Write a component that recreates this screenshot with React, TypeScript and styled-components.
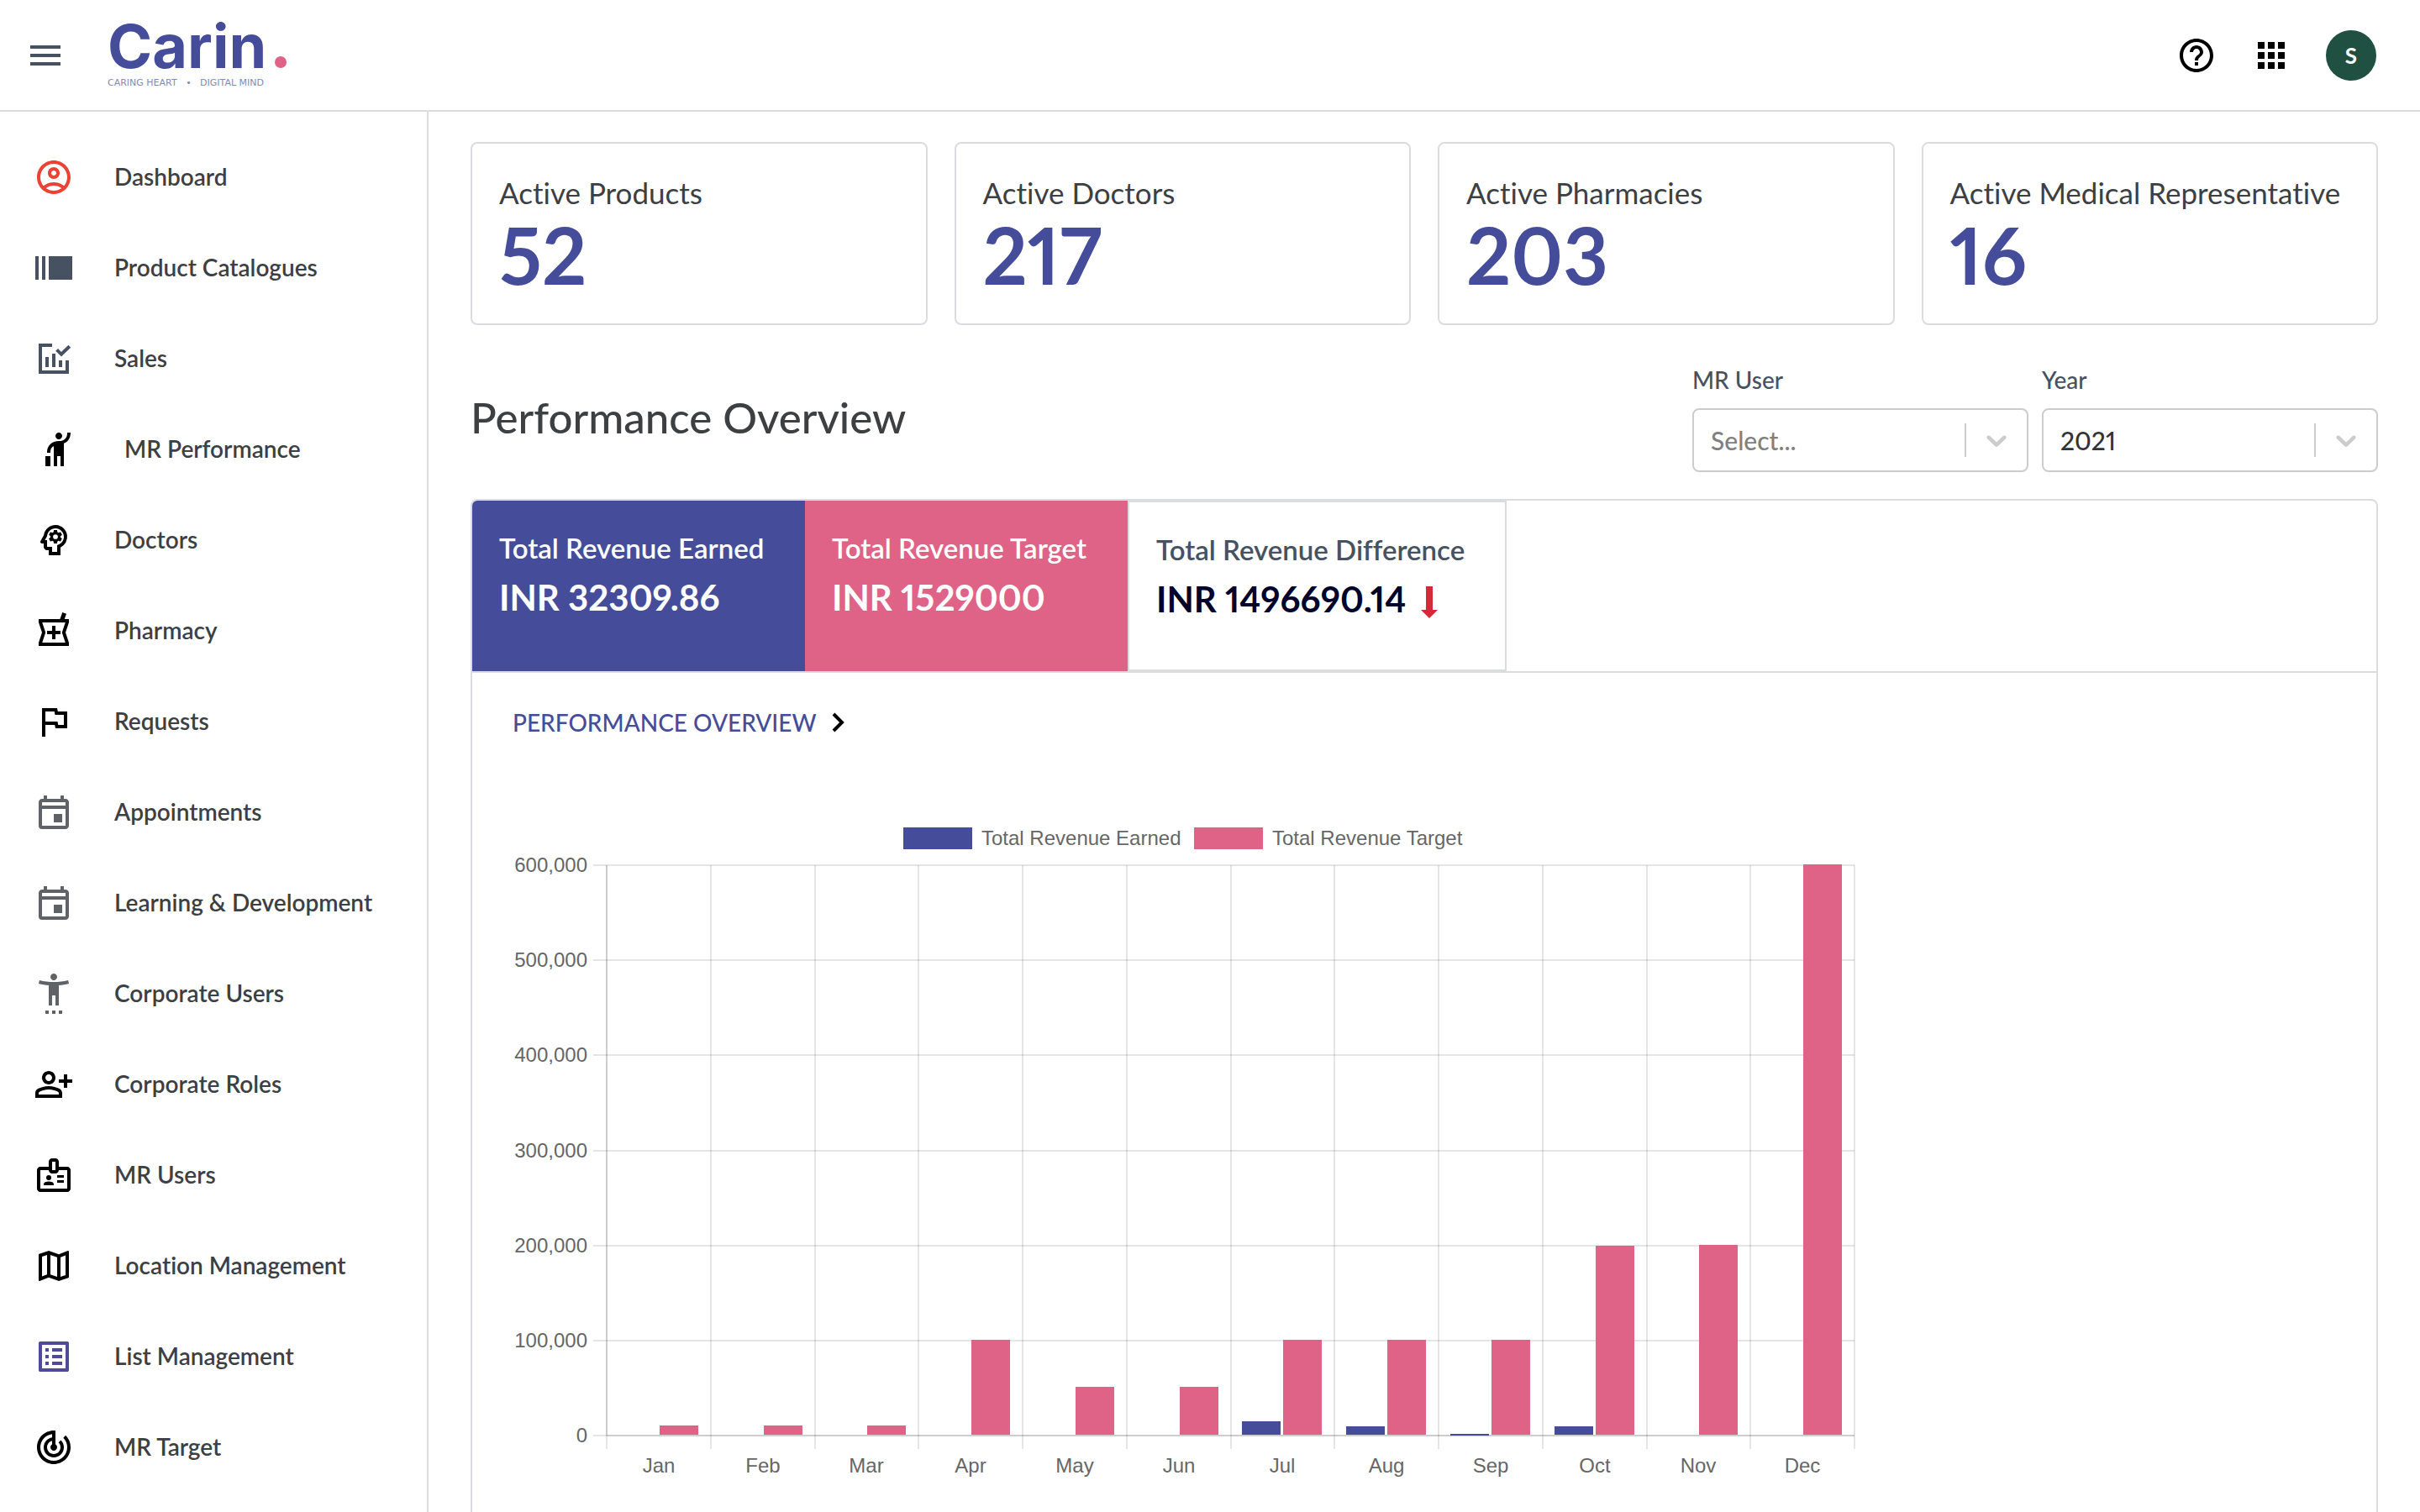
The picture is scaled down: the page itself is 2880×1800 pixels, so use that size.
import React, { useState } from "react";
import styled, { createGlobalStyle } from "styled-components";
import type { IconType } from "react-icons";
import {
  MdApps,
  MdHail,
  MdHelpOutline,
  MdMenu,
  MdOutlineAccountCircle,
  MdOutlineBadge,
  MdOutlineEvent,
  MdOutlineFlag,
  MdOutlineListAlt,
  MdOutlineLocalPharmacy,
  MdOutlineMap,
  MdOutlinePersonAddAlt,
  MdOutlinePsychology,
  MdSettingsAccessibility,
  MdTrackChanges,
} from "react-icons/md";

const color = {
  blue: "#454d9b",
  pink: "#df6387",
  text: "#3c4043",
  slate: "#465162",
  line: "#dadce0",
  navy: "#00042b",
  red: "#d62839",
};

const GlobalStyle = createGlobalStyle`
  *, *::before, *::after { box-sizing: border-box; }
  body {
    margin: 0;
    background: #fff;
    color: ${color.text};
    font-family: Lato, "Open Sans", sans-serif;
    font-variant-ligatures: none;
    font-variant-numeric: proportional-nums;
  }
  button, select { font: inherit; color: inherit; }
  h1, h2, p, dl, dd, ul { margin: 0; padding: 0; }
`;

/* ---------- shell ---------- */

const Shell = styled.div`
  display: grid;
  grid-template: auto minmax(0, 1fr) / 510px minmax(0, 1fr);
  height: 100vh;
  overflow: hidden;
`;

const Header = styled.header`
  grid-column: 1 / -1;
  display: flex;
  align-items: center;
  height: 133px;
  padding: 0 52px 0 30px;
  border-bottom: 2px solid ${color.line};
`;

const IconButton = styled.button<{ $tint?: string }>`
  display: grid;
  place-items: center;
  padding: 0;
  border: 0;
  background: none;
  color: ${(p) => p.$tint ?? "#000"};
  font-size: 48px;
  cursor: pointer;
`;

const Logo = styled.a`
  display: flex;
  flex-direction: column;
  gap: 2px;
  margin-left: 50px;
  padding-bottom: 8px;
  text-decoration: none;
`;

const Wordmark = styled.span`
  display: flex;
  align-items: baseline;
  gap: 10px;
  color: ${color.blue};
  font: 700 72px/72px Inter, sans-serif;

  &::after {
    content: "";
    width: 14px;
    height: 14px;
    border-radius: 50%;
    background: ${color.pink};
  }
`;

const Tagline = styled.span`
  color: #7f8db0;
  font: 11px/12px "DejaVu Sans", sans-serif;
`;

const HeaderActions = styled.div`
  display: flex;
  align-items: center;
  gap: 41px;
  margin-left: auto;
`;

const Avatar = styled.button`
  width: 60px;
  height: 60px;
  padding: 0;
  border: 0;
  border-radius: 50%;
  background: #205041;
  color: #fff;
  font-size: 26px;
  font-weight: 700;
`;

/* ---------- sidebar ---------- */

const Sidebar = styled.nav`
  padding-top: 24px;
  border-right: 2px solid ${color.line};
  overflow: hidden;
`;

const NavList = styled.ul`
  list-style: none;
`;

const NavLink = styled.a<{ $tint: string; $nested?: boolean }>`
  display: flex;
  align-items: center;
  gap: ${(p) => (p.$nested ? 54 : 48)}px;
  height: 108px;
  padding-left: ${(p) => (p.$nested ? 46 : 40)}px;
  color: ${color.text};
  text-decoration: none;

  svg {
    width: 48px;
    height: 48px;
    color: ${(p) => p.$tint};
  }
`;

const NavLabel = styled.span`
  padding-bottom: 2px;
  font-size: 28px;
  font-weight: 600;
  line-height: 36px;
`;

/* ---------- content ---------- */

const Main = styled.main`
  padding: 36px 50px 0;
  overflow: hidden;
`;

const StatGrid = styled.dl`
  display: grid;
  grid-template-columns: repeat(4, minmax(0, 1fr));
  gap: 32px;
`;

const StatCard = styled.div`
  display: flex;
  flex-direction: column;
  gap: 4px;
  padding: 36px 32px 34px;
  border: 2px solid ${color.line};
  border-radius: 8px;
`;

const StatLabel = styled.dt`
  font-size: 35px;
  line-height: 44px;
  white-space: nowrap;
`;

const StatValue = styled.dd`
  color: ${color.blue};
  font-size: 93px;
  font-weight: 700;
  line-height: 96px;
`;

const SectionHead = styled.div`
  display: flex;
  align-items: center;
  justify-content: space-between;
  margin: 47px 0 32px;
`;

const SectionTitle = styled.h1`
  padding-bottom: 2px;
  font-size: 51px;
  font-weight: 500;
  line-height: 62px;
`;

const Filters = styled.div`
  display: flex;
  gap: 16px;
`;

const Field = styled.div`
  display: flex;
  flex-direction: column;
  gap: 16px;
  width: 400px;
`;

const FieldLabel = styled.label`
  color: ${color.slate};
  font-size: 28px;
  font-weight: 500;
  line-height: 36px;
`;

const SelectWrap = styled.div`
  position: relative;
`;

const Select = styled.select<{ $empty: boolean }>`
  width: 100%;
  height: 76px;
  padding: 0 96px 0 20px;
  appearance: none;
  border: 2px solid #ccc;
  border-radius: 8px;
  background: #fff;
  color: ${(p) => (p.$empty ? "#808080" : "#333")};
  font-size: 30px;
  font-weight: 500;
`;

const SelectIndicator = styled.span`
  position: absolute;
  top: 18px;
  right: 2px;
  display: grid;
  place-items: center;
  width: 74px;
  height: 40px;
  border-left: 2px solid #ccc;
  color: #ccc;
  pointer-events: none;
`;

const Panel = styled.section`
  border: 2px solid ${color.line};
  border-radius: 8px;
  overflow: hidden;
`;

const Totals = styled.dl`
  display: flex;
  border-bottom: 2px solid ${color.line};
`;

const Total = styled.div<{ $fill?: string; $width: number }>`
  display: flex;
  flex-direction: column;
  gap: 16px;
  min-width: ${(p) => p.$width}px;
  min-height: 203px;
  padding: 36px 32px 0;
  border: ${(p) => (p.$fill ? "0" : `2px solid ${color.line}`)};
  background: ${(p) => p.$fill ?? "#fff"};
  color: ${(p) => (p.$fill ? "#fff" : color.slate)};
`;

const TotalLabel = styled.dt`
  font-size: 33px;
  font-weight: 600;
  line-height: 40px;
`;

const TotalValue = styled.dd<{ $tint: string }>`
  display: flex;
  align-items: flex-end;
  gap: 18px;
  color: ${(p) => p.$tint};
  font-size: 42px;
  font-weight: 700;
  line-height: 46px;
`;

const PanelBody = styled.div`
  padding: 41px 48px;
`;

const ViewToggle = styled.button`
  display: flex;
  align-items: center;
  gap: 18px;
  padding: 0;
  border: 0;
  background: none;
  color: ${color.blue};
  font-size: 28px;
  font-weight: 500;
  line-height: 36px;
  text-transform: uppercase;
  cursor: pointer;
`;

const ChartSvg = styled.svg`
  display: block;
  width: 1600px;
  height: 820px;
  margin-top: 82px;
  fill: #666;
  font: 24px "Liberation Sans", Arial, sans-serif;
`;

/* ---------- icons ---------- */

const CatalogueIcon = () => (
  <svg viewBox="0 0 24 24" fill="currentColor" aria-hidden="true">
    <path d="M1 5h2v14H1zM5 5h2v14H5zM9 5h14v14H9z" />
  </svg>
);

const SalesIcon = () => (
  <svg viewBox="0 0 24 24" fill="currentColor" aria-hidden="true">
    <path d="M3 3h8v2H5v14h14v-6h2v8H3zM7 11h2v6H7zM11 9h2v8h-2zM15 13h2v4h-2z" />
    <path d="M13.8 6.7l2.7 2.7 4.9-4.8" fill="none" stroke="currentColor" strokeWidth="2" />
  </svg>
);

const SelectChevron = () => (
  <svg width="40" height="40" viewBox="0 0 20 20" fill="currentColor" aria-hidden="true">
    <path d="M4.516 7.548c0.436-0.446 1.043-0.481 1.576 0l3.908 3.747 3.908-3.747c0.533-0.481 1.141-0.446 1.574 0 0.436 0.445 0.408 1.197 0 1.615-0.406 0.418-4.695 4.502-4.695 4.502-0.217 0.223-0.502 0.335-0.787 0.335s-0.57-0.112-0.789-0.335c0 0-4.287-4.084-4.695-4.502s-0.436-1.17 0-1.615z" />
  </svg>
);

const DownArrow = () => (
  <svg width="20" height="38" viewBox="0 0 20 38" fill={color.red} aria-hidden="true">
    <path d="M6 0h8v28h6L10 38 0 28h6z" />
  </svg>
);

const RightChevron = () => (
  <svg width="16" height="24" viewBox="0 0 16 24" fill="none" stroke="#000" strokeWidth="4" aria-hidden="true">
    <path d="M2 2l10 10L2 22" />
  </svg>
);

/* ---------- data ---------- */

type NavItem = { label: string; icon: IconType | (() => React.JSX.Element); tint: string; nested?: boolean };

const navItems: NavItem[] = [
  { label: "Dashboard", icon: MdOutlineAccountCircle, tint: "#ea4335" },
  { label: "Product Catalogues", icon: CatalogueIcon, tint: color.slate },
  { label: "Sales", icon: SalesIcon, tint: color.slate },
  { label: "MR Performance", icon: MdHail, tint: "#000", nested: true },
  { label: "Doctors", icon: MdOutlinePsychology, tint: "#000" },
  { label: "Pharmacy", icon: MdOutlineLocalPharmacy, tint: "#000" },
  { label: "Requests", icon: MdOutlineFlag, tint: "#000" },
  { label: "Appointments", icon: MdOutlineEvent, tint: "#5f6368" },
  { label: "Learning & Development", icon: MdOutlineEvent, tint: "#5f6368" },
  { label: "Corporate Users", icon: MdSettingsAccessibility, tint: "#5f6368" },
  { label: "Corporate Roles", icon: MdOutlinePersonAddAlt, tint: "#000" },
  { label: "MR Users", icon: MdOutlineBadge, tint: "#000" },
  { label: "Location Management", icon: MdOutlineMap, tint: "#000" },
  { label: "List Management", icon: MdOutlineListAlt, tint: "#4f4a9b" },
  { label: "MR Target", icon: MdTrackChanges, tint: "#000" },
];

const stats = [
  { label: "Active Products", value: 52 },
  { label: "Active Doctors", value: 217 },
  { label: "Active Pharmacies", value: 203 },
  { label: "Active Medical Representative", value: 16 },
];

const months = [
  { name: "Jan", earned: 0, target: 10000 },
  { name: "Feb", earned: 0, target: 10000 },
  { name: "Mar", earned: 0, target: 10000 },
  { name: "Apr", earned: 0, target: 100000 },
  { name: "May", earned: 0, target: 50000 },
  { name: "Jun", earned: 0, target: 50000 },
  { name: "Jul", earned: 14200, target: 100000 },
  { name: "Aug", earned: 8400, target: 100000 },
  { name: "Sep", earned: 500, target: 100000 },
  { name: "Oct", earned: 9210, target: 199000 },
  { name: "Nov", earned: 0, target: 200000 },
  { name: "Dec", earned: 0, target: 600000 },
];

/* ---------- chart ---------- */

const plot = { left: 112, right: 1597, top: 70, bottom: 749, max: 600000 };
const slot = (plot.right - plot.left) / months.length;
const yOf = (v: number) => plot.bottom - ((plot.bottom - plot.top) * v) / plot.max;

function Bar({ x, value, fill }: { x: number; value: number; fill: string }) {
  if (!value) return null;
  const top = Math.round(yOf(value)) - 1;
  const left = Math.round(x);
  return <rect x={left} y={top} width={46} height={Math.max(plot.bottom - 1 - top, 2)} fill={fill} />;
}

function RevenueChart() {
  const ticks = [0, 1, 2, 3, 4, 5, 6].map((n) => n * 100000);
  return (
    <ChartSvg viewBox="0 0 1600 820" role="img" aria-label="Revenue earned and revenue target by month">
      <rect x="465" y="25" width="82" height="26" fill={color.blue} />
      <text x="558" y="46">Total Revenue Earned</text>
      <rect x="811" y="25" width="82" height="26" fill={color.pink} />
      <text x="904" y="46">Total Revenue Target</text>

      {ticks.map((t) => {
        const y = Math.round(yOf(t));
        return (
          <g key={t}>
            <rect x={plot.left - 16} y={y - 1} width={plot.right - plot.left + 16} height="2" fill="#000" fillOpacity="0.1" />
            <text x="89" y={y + 8} textAnchor="end">{t.toLocaleString("en-US")}</text>
          </g>
        );
      })}
      {[...months, null].map((_, i) => (
        <rect key={i} x={Math.round(plot.left + i * slot) - 1} y={plot.top} width="2" height={plot.bottom - plot.top + 16} fill="#000" fillOpacity="0.1" />
      ))}
      <rect x={plot.left - 1} y={plot.top} width="2" height={plot.bottom - plot.top} fill="#000" fillOpacity="0.1" />
      <rect x={plot.left} y={plot.bottom - 1} width={plot.right - plot.left} height="2" fill="#000" fillOpacity="0.1" />

      {months.map((m, i) => {
        const mid = plot.left + (i + 0.5) * slot;
        return (
          <g key={m.name}>
            <Bar x={mid - 48} value={m.earned} fill={color.blue} />
            <Bar x={mid + 1} value={m.target} fill={color.pink} />
            <text x={Math.round(mid)} y="793" textAnchor="middle">{m.name}</text>
          </g>
        );
      })}
    </ChartSvg>
  );
}

/* ---------- filters ---------- */

type FilterProps = { id: string; label: string; options: string[]; initial?: string };

function Filter({ id, label, options, initial = "" }: FilterProps) {
  const [value, setValue] = useState(initial);
  return (
    <Field>
      <FieldLabel htmlFor={id}>{label}</FieldLabel>
      <SelectWrap>
        <Select id={id} value={value} $empty={!value} onChange={(e) => setValue(e.target.value)}>
          {!initial && <option value="">Select...</option>}
          {options.map((o) => (
            <option key={o}>{o}</option>
          ))}
        </Select>
        <SelectIndicator>
          <SelectChevron />
        </SelectIndicator>
      </SelectWrap>
    </Field>
  );
}

export default function App() {
  return (
    <Shell>
      <GlobalStyle />
      <Header>
        <IconButton type="button" aria-label="Menu" $tint={color.slate}>
          <MdMenu />
        </IconButton>
        <Logo href="#">
          <Wordmark>Carin</Wordmark>
          <Tagline>CARING HEART &nbsp;&nbsp;•&nbsp;&nbsp; DIGITAL MIND</Tagline>
        </Logo>
        <HeaderActions>
          <IconButton type="button" aria-label="Help">
            <MdHelpOutline />
          </IconButton>
          <IconButton type="button" aria-label="Apps">
            <MdApps />
          </IconButton>
          <Avatar type="button">S</Avatar>
        </HeaderActions>
      </Header>

      <Sidebar>
        <NavList>
          {navItems.map(({ label, icon: Icon, tint, nested }) => (
            <li key={label}>
              <NavLink href="#" $tint={tint} $nested={nested}>
                <Icon />
                <NavLabel>{label}</NavLabel>
              </NavLink>
            </li>
          ))}
        </NavList>
      </Sidebar>

      <Main>
        <StatGrid>
          {stats.map((s) => (
            <StatCard key={s.label}>
              <StatLabel>{s.label}</StatLabel>
              <StatValue>{s.value}</StatValue>
            </StatCard>
          ))}
        </StatGrid>

        <SectionHead>
          <SectionTitle>Performance Overview</SectionTitle>
          <Filters>
            <Filter id="mr-user" label="MR User" options={[]} />
            <Filter id="year" label="Year" options={["2021"]} initial="2021" />
          </Filters>
        </SectionHead>

        <Panel>
          <Totals>
            <Total $fill={color.blue} $width={396}>
              <TotalLabel>Total Revenue Earned</TotalLabel>
              <TotalValue $tint="#fff">INR 32309.86</TotalValue>
            </Total>
            <Total $fill={color.pink} $width={384}>
              <TotalLabel>Total Revenue Target</TotalLabel>
              <TotalValue $tint="#fff">INR 1529000</TotalValue>
            </Total>
            <Total $width={451}>
              <TotalLabel>Total Revenue Difference</TotalLabel>
              <TotalValue $tint={color.navy}>
                INR 1496690.14
                <DownArrow />
              </TotalValue>
            </Total>
          </Totals>
          <PanelBody>
            <ViewToggle type="button">
              Performance Overview
              <RightChevron />
            </ViewToggle>
            <RevenueChart />
          </PanelBody>
        </Panel>
      </Main>
    </Shell>
  );
}
